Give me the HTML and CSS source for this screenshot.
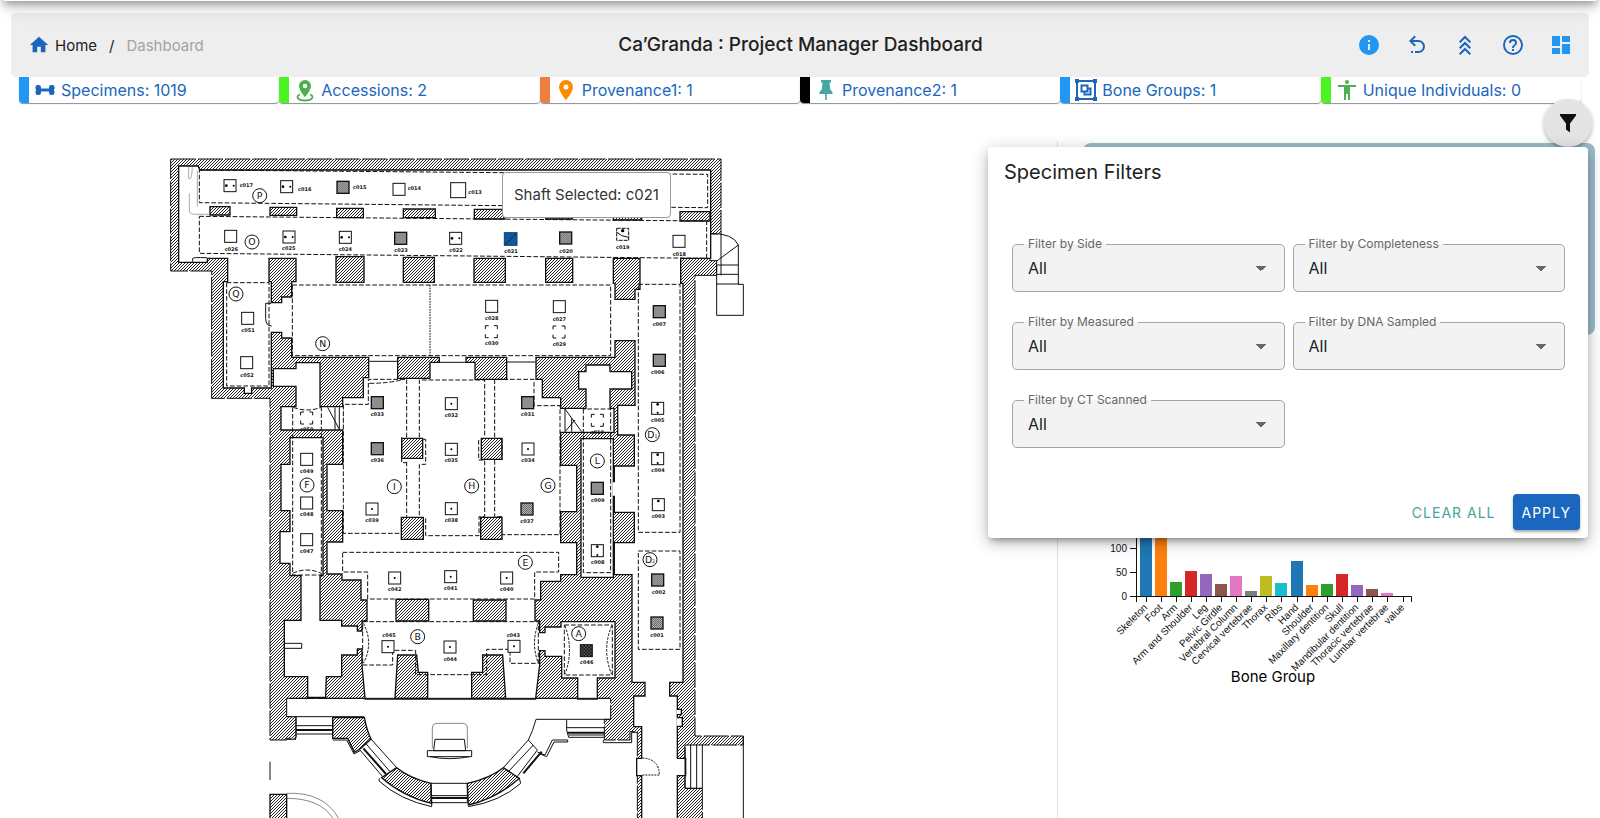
FILE: index.html
```html
<!DOCTYPE html>
<html lang="en">
<head>
<meta charset="utf-8">
<title>Ca’Granda : Project Manager Dashboard</title>
<link rel="stylesheet" href="styles.css">
</head>
<body>
<div class="app">
  <div class="app-bar-edge"></div>
  <header class="header">
    <nav class="crumbs" aria-label="Breadcrumb">
      <a class="crumb-home" href="#">
        <svg class="icon-home" viewBox="0 0 24 24"><path d="M10 20v-6h4v6h5v-8h3L12 3 2 12h3v8h5z"/></svg>
        <span>Home</span>
      </a>
      <span>/</span>
      <span class="crumb-current">Dashboard</span>
    </nav>
    <h1 class="title">Ca’Granda : Project Manager Dashboard</h1>
    <div class="tools">
      <button class="tool light" aria-label="Information"><svg viewBox="0 0 24 24"><path d="M13 9h-2V7h2m0 10h-2v-6h2m-1-9A10 10 0 0 0 2 12a10 10 0 0 0 10 10 10 10 0 0 0 10-10A10 10 0 0 0 12 2z"/></svg></button>
      <button class="tool" aria-label="Undo"><svg viewBox="0 0 24 24"><path d="M13.5 7a6.5 6.5 0 0 1 6.5 6.5 6.5 6.5 0 0 1-6.5 6.5H10v-2h3.5c2.5 0 4.5-2 4.5-4.5S16 9 13.5 9H7.83l3.08 3.09L9.5 13.5 4 8l5.500-5.500 1.420 1.410L7.830 7h5.670M6 18h2v2H6v-2z"/></svg></button>
      <button class="tool" aria-label="Collapse"><svg viewBox="0 0 24 24"><path class="stroke" d="M6.700 9.300 12 4l5.300 5.300M6.700 15.300 12 10l5.300 5.300M6.700 21.300 12 16l5.300 5.300"/></svg></button>
      <button class="tool" aria-label="Help"><svg viewBox="0 0 24 24"><path d="M11 18h2v-2h-2v2m1-16A10 10 0 0 0 2 12a10 10 0 0 0 10 10 10 10 0 0 0 10-10A10 10 0 0 0 12 2m0 18c-4.410 0-8-3.590-8-8s3.590-8 8-8 8 3.590 8 8-3.590 8-8 8m0-14a4 4 0 0 0-4 4h2a2 2 0 0 1 2-2 2 2 0 0 1 2 2c0 2-3 1.750-3 5h2c0-2.250 3-2.500 3-5a4 4 0 0 0-4-4z"/></svg></button>
      <button class="tool light" aria-label="Dashboard layout"><svg viewBox="0 0 24 24"><path d="M13 3v6h8V3m-8 18h8V11h-8M3 21h8v-6H3m0-2h8V3H3v10z"/></svg></button>
    </div>
  </header>

  <section class="stats" aria-label="Totals">
    <a class="stat blue" href="#"><svg viewBox="0 0 24 24" fill="#1b66bd"><path d="M6 10.500h12v3H6z"/><rect x="2.500" y="7" width="5.500" height="5.500" rx="2.300"/><rect x="2.500" y="11.500" width="5.500" height="5.500" rx="2.300"/><rect x="16" y="7" width="5.500" height="5.500" rx="2.300"/><rect x="16" y="11.500" width="5.500" height="5.500" rx="2.300"/></svg>Specimens: 1019</a>
    <a class="stat green" href="#"><svg viewBox="0 0 24 24" fill="#4caf50"><path d="M12 2a6 6 0 0 0-6 6c0 4.500 6 11 6 11s6-6.500 6-11a6 6 0 0 0-6-6m0 8.200A2.200 2.200 0 1 1 12 5.800a2.200 2.200 0 0 1 0 4.400z"/><path d="M7 16.500C2.500 18 4 22.500 12 22.500s9.500-4.500 5-6" fill="none" stroke="#4caf50" stroke-width="1.800"/></svg>Accessions: 2</a>
    <a class="stat orange" href="#"><svg viewBox="0 0 24 24" fill="#fb8c00"><path d="M12 11.500A2.500 2.500 0 0 1 9.500 9 2.500 2.500 0 0 1 12 6.500 2.500 2.500 0 0 1 14.500 9a2.500 2.500 0 0 1-2.500 2.500M12 2a7 7 0 0 0-7 7c0 5.250 7 13 7 13s7-7.750 7-13a7 7 0 0 0-7-7z"/></svg>Provenance1: 1</a>
    <a class="stat black" href="#"><svg viewBox="0 0 24 24" fill="#45a8a3"><path d="M17 2v2.500h-1.500l.8 7 2.200 2.500v2h-5.700v6h-1.600v-6H5.500v-2l2.200-2.500.8-7H7V2z"/></svg>Provenance2: 1</a>
    <a class="stat blue" href="#"><svg viewBox="0 0 24 24"><g fill="none" stroke="#1b66bd" stroke-width="2"><path d="M3 3h18v18H3zM7.500 7.500h6v6h-6zM10.500 13.500v3h6v-6h-3"/></g><path fill="#1b66bd" d="M1 1h4v4H1zM19 1h4v4h-4zM1 19h4v4H1zM19 19h4v4h-4z"/></svg>Bone Groups: 1</a>
    <a class="stat green" href="#"><svg viewBox="0 0 24 24" fill="#4caf50"><circle cx="12" cy="4" r="2"/><path d="M3 7h18v2h-6v13h-2v-6h-2v6H9V9H3z"/></svg>Unique Individuals: 0</a>
  </section>

  <main class="main">
    <section class="map-pane">
      <div class="map-wrap">
      <svg class="map" viewBox="0 0 1800 2004" role="img" aria-label="Crypt floor plan">
        <defs>
          <pattern id="hatch" width="9" height="9" patternUnits="userSpaceOnUse"><path d="M-2 2L2-2M0 9L9 0M7 11L11 7" stroke="#111" stroke-width="2.800"/></pattern>
          <pattern id="grain" width="6" height="6" patternUnits="userSpaceOnUse"><rect width="6" height="6" fill="#b5b5b5"/><path d="M0 0h3v3H0zM3 3h3v3H3z" fill="#666"/></pattern>
          <pattern id="check" width="10" height="10" patternUnits="userSpaceOnUse"><rect width="10" height="10" fill="#111"/><path d="M1 1h3v3H1zM6 6h3v3H6z" fill="#fff"/></pattern>
          <g id="sq"><rect x="-18" y="-18" width="36" height="36" fill="#fff" stroke="#111" stroke-width="3"/></g>
          <g id="dk"><rect x="-18" y="-18" width="36" height="36" fill="url(#grain)" stroke="#111" stroke-width="4"/></g>
          <g id="dot"><use href="#sq"/><circle r="3"/></g>
          <g id="hd"><use href="#sq"/><circle cx="-11" r="4"/><circle cx="11" r="3"/></g>
          <g id="vd"><use href="#sq"/><circle cy="-12" r="4"/><circle cy="13" r="3"/></g>
          <g id="ds"><path d="M-18 -8V-18H-8M8 -18H18V-8M18 8V18H8M-8 18H-18V8" fill="none" stroke="#111" stroke-width="3"/></g>
          <g id="rooms">
            <path d="M58 50H113L118 62H1650V323H140V335H58Z"/>
            <path d="M205 320H325V397H332V460H367V443H397V397H410V320H1358V402H1363V450H1427V420H1442V320H1560V402H1567V1595H1527V1640H1550V2004H1447V1728H1423V1640H1457V1595H1418V1272H1365V1180H1425V1085H1365V1037H1358V997H1365V950H1425V853H1375V768H1427V570H1363V620H1126V690H1145V745H1200V948H1248V1083H1200V1180H1248V1272H1200V1292H1140V1348H1123V1415H1137V1450H1157V1433H1205V1417H1363V1582H1310V1645H1255V1582H1207V1517H1157V1500H1137V1545L1125 1645H617L608 1545V1495H590V1513H543V1578H497L495 1640H445V1578H375V1413H425V1275H392V1238H362V1147H392V1080H365V945H392V865H487V1275H478V1413H543V1430H590V1445H608V1415H623V1348H605V1288H548V1270H503V1178H550V1080H503V945H550V745H612V685H628V620H397V562H367V545H332V712H192V397H205Z"/>
            <path d="M410 640H478V772H550V838H365V772H410V707H342V658H410Z"/>
            <path d="M1280 647H1348V667H1413V715H1348V777H1360V845H1200V777H1280V715H1258V667H1280Z"/>
            <path d="M1265 868H1358V1280H1265ZM255 710H273V728H255ZM1550 1680H1562V1692H1550ZM1550 1705H1565V1727H1550ZM1545 1827H1575V1875H1545ZM1432 1827H1450V1875H1432Z"/>
          </g>
        </defs>
        <path d="M32 27H1683V252H1650V332H1670V376H1605V1758H1750V1785H1575V1915H1627V2010H1432V1745H1410V1770H1333V1708H1352V1645H380V1700H408V1765H380V1770H330V745H155V363H32Z" fill="url(#hatch)" stroke="#111" stroke-width="3" stroke-dasharray="75 7"/>
        <use href="#rooms" fill="#111" stroke="#111" stroke-width="8"/>
        <use href="#rooms" fill="#fff"/>

        <g fill="url(#hatch)" stroke="#111" stroke-width="4">
          <path d="M150 170h60v25h-60zM330 172h80v24h-80zM530 175h80v28h-80zM730 177h96v26h-96zM943 178h92v29h-92zM1157 182h80v25h-80zM1360 184h85v26h-85zM1560 185h90v28h-90z"/>
          <path d="M528 320h84v77h-84zM730 322h93v75h-93zM942 325h94v72h-94zM1157 325h81v72h-81z"/>
          <path d="M713 622H838V637H810V685H713ZM918 622H1040V688H945V637H918Z"/>
          <path d="M725 865h63v60h-63zM964 865h62v63h-62zM724 1102h66v66h-66zM962 1102h64v66h-64z"/>
          <path d="M708 1348h98v65h-98zM940 1350h98v63h-98z"/>
          <path d="M713 1515H770L775 1567H803V1645H705ZM968 1515H1028L1037 1645H935V1567H968Z"/>
          <path d="M518 1703H613Q620 1740 633 1767L603 1795 583 1807 563 1765H518Z"/>
          <path d="M710 1853Q750 1885 813 1900L815 1960Q730 1940 665 1883Z"/>
          <path d="M922 1900Q990 1885 1030 1853L1078 1885Q1010 1945 925 1965Z"/>
          <path d="M330 1933h50v80h-50z"/>
        </g>

        <g fill="none" stroke="#111" stroke-width="3">
          <path d="M628 634H713M838 637H918M1040 636H1126M380 1645H1352M380 1700H613M408 1700V1760M408 1727H520M410 1752H518V1703"/>
          <path d="M408 1740H518M610 1795L678 1872M1090 1870L1145 1805M816 1944H922M1222 1748H1333" stroke-width="6"/>
          <path d="M633 1767L710 1853M617 1780L690 1865M600 1800L668 1880M813 1900H922V1958M813 1900V1958H922M816 1937H922M1030 1853L1105 1770L1132 1800L1070 1882M1045 1865L1120 1785M1128 1708Q1118 1745 1105 1770M1128 1708H1352M1220 1710V1740L1226 1762H1333M1220 1733H1333M1226 1755H1333"/>
          <path d="M380 1768H408M518 1770H560L582 1812 600 1802M658 1885L657 1893Q720 1950 815 1970V1960M925 1970Q1020 1955 1082 1900L1078 1885M1132 1806L1155 1815 1177 1770H1223V1776H1182L1160 1820 1140 1812M1330 1770V1778H1415V1747H1432"/>
          <path d="M802 1802H935V1820H802ZM810 1820Q868 1832 928 1820M825 1768H913L917 1802H821Z"/>
          <path d="M817 1795V1735Q817 1720 832 1720H907Q922 1720 922 1735V1795M380 1930Q490 1925 535 2004M380 1945Q480 1945 518 2004" stroke-width="1.500"/>
          <path d="M330 1835V1890M1575 1785V1915H1627V1785M1592 1785V1915M1610 1785V1915M1750 1758V2010"/>
          <path d="M1650 250Q1720 250 1735 285V403H1750V496H1670V345M1668 335L1735 285M1683 252V376M1670 345H1735M1670 373H1735M1670 402H1738"/>
          <path d="M98 335V325Q98 322 140 323M333 460H317V505Q317 528 335 528M375 1480H425V1495H375M503 772L538 838M525 772V838M538 772V838M1215 777V845M1215 777L1265 845M1235 805V845M1215 845L1245 810"/>
          <path d="M86 50V85Q95 95 97 52M88 130V185Q90 193 110 193H150M112 62V170" stroke-width="1.500" stroke="#555"/>
        </g>

        <g fill="none" stroke="#111" stroke-width="3" stroke-dasharray="14 6">
          <path d="M118 60L1030 68L1643 73V173L118 158Z"/>
          <path d="M118 199L1640 213V325L118 310Z"/>
          <path d="M200 398H327V708H200Z"/>
          <path d="M397 405H1352V617H397Z"/>
          <path d="M810 405V617" stroke-dasharray="5 3"/>
          <path d="M1435 403H1560V1147H1435ZM1435 1203H1560V1498H1435Z"/>
          <path d="M740 862V688H625V763H550V1150H724M740 935V1100M725 862V938H740"/>
          <path d="M628 700Q690 700 735 687"/>
          <path d="M778 862V690H974V862M790 868H797V943H778V1100M797 1105V1157H957V1100H974V930H956V865"/>
          <path d="M1004 862V688H1122V767H1200V1154H1026M1004 930V1100M1026 865V930M1026 1100H1004"/>
          <path d="M548 1207H1196V1266H1124V1347H623V1266H548Z"/>
          <path d="M608 1415H1135V1540H1050V1498H980V1574H767V1501H698V1545H608Z"/>
          <path d="M610 1420Q642 1480 610 1540M1135 1420Q1112 1480 1135 1540M1215 1427Q1242 1500 1215 1573M1355 1427Q1325 1500 1355 1573" stroke-dasharray="8 4"/>
          <path d="M1213 1425H1357V1575H1213Z"/>
          <path d="M398 772V1275H484V772M398 1270Q440 1250 484 1270M400 772Q440 788 484 772M1270 777V1268H1352V777Z"/>
          <path d="M1447 1824Q1498 1827 1498 1875H1447" stroke-dasharray="6 3"/>
        </g>

        <g class="zones">
          <g fill="#fff" stroke="#111" stroke-width="3"><circle cx="299" cy="137" r="21"/><circle cx="276" cy="276" r="21"/><circle cx="228" cy="432" r="21"/><circle cx="488" cy="581" r="21"/><circle cx="1477" cy="854" r="21"/><circle cx="1470" cy="1229" r="21"/><circle cx="703" cy="1010" r="21"/><circle cx="935" cy="1008" r="21"/><circle cx="1164" cy="1006" r="21"/><circle cx="441" cy="1005" r="21"/><circle cx="1096" cy="1237" r="21"/><circle cx="773" cy="1460" r="21"/><circle cx="1256" cy="1451" r="21"/><circle cx="1312" cy="933" r="21"/></g>
          <text x="299" y="147">P</text><text x="276" y="286">O</text><text x="228" y="442">Q</text><text x="488" y="591">N</text>
          <text x="1477" y="864">D<tspan class="sub">1</tspan></text><text x="1470" y="1239">D<tspan class="sub">2</tspan></text>
          <text x="703" y="1020">I</text><text x="935" y="1018">H</text><text x="1164" y="1016">G</text><text x="441" y="1015">F</text><text x="1096" y="1247">E</text><text x="773" y="1470">B</text><text x="1256" y="1461">A</text><text x="1312" y="943">L</text>
        </g>

        <g class="shafts">
          <use href="#hd" x="210" y="107"/><text x="259" y="112">c017</text>
          <use href="#hd" x="380" y="110"/><text x="434" y="123">c016</text>
          <use href="#dk" x="549" y="112"/><text x="599" y="117">c015</text>
          <use href="#sq" x="717" y="118"/><text x="763" y="121">c014</text>
          <rect x="872" y="98" width="45" height="45" fill="#fff" stroke="#111" stroke-width="3"/><text x="945" y="131">c013</text>
          <use href="#sq" x="212" y="259"/><text x="214" y="302">c026</text>
          <use href="#hd" x="387" y="261"/><text x="386" y="301">c025</text>
          <use href="#hd" x="556" y="262"/><text x="556" y="303">c024</text>
          <use href="#dk" x="722" y="265"/><text x="723" y="306">c023</text>
          <use href="#hd" x="887" y="265"/><text x="888" y="307">c022</text>
          <rect x="1033" y="248" width="38" height="38" fill="#11589f" stroke="#0b3f78" stroke-width="3"/><path d="M1035 284L1070 249" stroke="#111" stroke-width="3" stroke-dasharray="9 3"/><text x="1053" y="310">c021</text>
          <use href="#dk" x="1217" y="264"/><text x="1218" y="308">c020</text>
          <rect x="1370" y="235" width="36" height="36" fill="none" stroke="#111" stroke-width="3" stroke-dasharray="12 3"/><path d="M1370 246L1385 257 1406 262" fill="none" stroke="#111" stroke-width="3"/><circle cx="1388" cy="242" r="5"/><text x="1388" y="296">c019</text>
          <use href="#sq" x="1557" y="274"/><text x="1558" y="317">c018</text>
          <use href="#sq" x="263" y="505"/><text x="264" y="547">c051</text>
          <use href="#sq" x="260" y="638"/><text x="261" y="681">c052</text>
          <use href="#sq" x="995" y="469"/><text x="995" y="511">c028</text>
          <use href="#sq" x="1198" y="470"/><text x="1198" y="512">c027</text>
          <use href="#ds" x="994" y="545"/><text x="995" y="586">c030</text>
          <use href="#ds" x="1197" y="546"/><text x="1198" y="587">c029</text>
          <use href="#dk" x="1498" y="485"/><text x="1498" y="527">c007</text>
          <use href="#dk" x="1498" y="631"/><text x="1493" y="672">c006</text>
          <use href="#vd" x="1493" y="775"/><text x="1493" y="815">c005</text>
          <use href="#vd" x="1493" y="926"/><text x="1494" y="967">c004</text>
          <use href="#sq" x="1495" y="1064"/><circle cx="1495" cy="1053" r="4"/><text x="1495" y="1105">c003</text>
          <use href="#dk" x="1493" y="1290"/><text x="1496" y="1331">c002</text>
          <use href="#dk" x="1491" y="1419"/><text x="1491" y="1461">c001</text>
          <use href="#dk" x="652" y="758"/><text x="652" y="798">c033</text>
          <use href="#dot" x="874" y="761"/><text x="874" y="801">c032</text>
          <use href="#dk" x="1103" y="758"/><text x="1103" y="799">c031</text>
          <use href="#dk" x="652" y="896"/><text x="652" y="936">c036</text>
          <use href="#dot" x="874" y="898"/><text x="874" y="937">c035</text>
          <use href="#dot" x="1104" y="897"/><text x="1104" y="936">c034</text>
          <use href="#dot" x="636" y="1077"/><text x="636" y="1117">c039</text>
          <use href="#dot" x="874" y="1076"/><text x="874" y="1117">c038</text>
          <use href="#dk" x="1101" y="1077"/><text x="1101" y="1119">c037</text>
          <use href="#dot" x="704" y="1284"/><text x="704" y="1324">c042</text>
          <use href="#dot" x="872" y="1280"/><text x="872" y="1320">c041</text>
          <use href="#dot" x="1040" y="1284"/><text x="1040" y="1324">c040</text>
          <use href="#sq" x="440" y="928"/><text x="440" y="968">c049</text>
          <use href="#sq" x="440" y="1059"/><text x="440" y="1099">c048</text>
          <use href="#sq" x="440" y="1169"/><text x="440" y="1209">c047</text>
          <use href="#ds" x="440" y="804"/><text x="440" y="844">c050</text>
          <use href="#dot" x="684" y="1490"/><text x="687" y="1461">c045</text>
          <use href="#dot" x="870" y="1491"/><text x="871" y="1532">c044</text>
          <use href="#dot" x="1062" y="1489"/><text x="1060" y="1461">c043</text>
          <rect x="1261" y="1484" width="36" height="36" fill="url(#check)" stroke="#111" stroke-width="3"/><text x="1280" y="1541">c046</text>
          <use href="#dk" x="1312" y="1015"/><text x="1313" y="1057">c009</text>
          <use href="#vd" x="1312" y="1202"/><text x="1313" y="1243">c008</text>
          <use href="#ds" x="1312" y="811"/><text x="1312" y="851">c010</text>
        </g>
      </svg>
      <div class="tooltip" role="tooltip">Shaft Selected: c021</div>
      </div>
    </section>

    <aside class="side-pane">
      <div class="summary-card"></div>
      <svg class="chart" viewBox="0 0 420 340" role="img" aria-label="Bone group counts">
        <g>
          <rect x="55" y="40" width="12" height="201" fill="#1f77b4"/><rect x="70" y="100" width="12" height="141" fill="#ff7f0e"/><rect x="85" y="227" width="12" height="14" fill="#2ca02c"/><rect x="100" y="216" width="12" height="25" fill="#d62728"/><rect x="115" y="219" width="12" height="22" fill="#9467bd"/><rect x="130" y="229" width="12" height="12" fill="#8c564b"/><rect x="145" y="221" width="12" height="20" fill="#e377c2"/><rect x="160" y="236" width="12" height="5" fill="#7f7f7f"/><rect x="175" y="221" width="12" height="20" fill="#bcbd22"/><rect x="190" y="228" width="12" height="13" fill="#17becf"/><rect x="206" y="206" width="12" height="35" fill="#1f77b4"/><rect x="221" y="230" width="12" height="11" fill="#ff7f0e"/><rect x="236" y="229" width="12" height="12" fill="#2ca02c"/><rect x="251" y="219" width="12" height="22" fill="#d62728"/><rect x="266" y="230" width="12" height="11" fill="#9467bd"/><rect x="281" y="234" width="12" height="7" fill="#8c564b"/><rect x="296" y="238" width="12" height="3" fill="#e377c2"/>
        </g>
        <path class="axis" d="M51.500 20V247M45 193.500H51M45 217.500H51M45 241.500H326.500V247M61.500 241V247M76.500 241V247M91.500 241V247M106.500 241V247M121.500 241V247M136.500 241V247M151.500 241V247M166.500 241V247M181.500 241V247M196.500 241V247M212.500 241V247M227.500 241V247M242.500 241V247M257.500 241V247M272.500 241V247M287.500 241V247M302.500 241V247M318.500 241V247"/>
        <g class="ticks">
          <text x="42" y="197">100</text><text x="42" y="221">50</text><text x="42" y="245">0</text>
          <text transform="translate(63 253) rotate(-45)">Skeleton</text><text transform="translate(78 253) rotate(-45)">Foot</text><text transform="translate(93 253) rotate(-45)">Arm</text><text transform="translate(108 253) rotate(-45)">Arm and Shoulder</text><text transform="translate(123 253) rotate(-45)">Leg</text><text transform="translate(138 253) rotate(-45)">Pelvic Girdle</text><text transform="translate(153 253) rotate(-45)">Vertebral Column</text><text transform="translate(168 253) rotate(-45)">Cervical vertebrae</text><text transform="translate(183 253) rotate(-45)">Thorax</text><text transform="translate(198 253) rotate(-45)">Ribs</text><text transform="translate(214 253) rotate(-45)">Hand</text><text transform="translate(229 253) rotate(-45)">Shoulder</text><text transform="translate(244 253) rotate(-45)">Maxillary dentition</text><text transform="translate(259 253) rotate(-45)">Skull</text><text transform="translate(274 253) rotate(-45)">Mandibular dentition</text><text transform="translate(289 253) rotate(-45)">Thoracic vertebrae</text><text transform="translate(304 253) rotate(-45)">Lumbar vertebrae</text><text transform="translate(320 253) rotate(-45)">value</text>
        </g>
        <text class="chart-title" x="188" y="327">Bone Group</text>
      </svg>
    </aside>

    <button class="fab" aria-label="Filters"><svg viewBox="0 0 24 24"><path d="M4 3h16v1.500L14 12.500V21.500L10 18.500V12.500L4 4.500z"/></svg></button>

    <form class="filters">
      <h2 class="filters-title">Specimen Filters</h2>
      <div class="fields">
        <fieldset class="field"><legend><label for="f-side">Filter by Side</label></legend><select id="f-side"><option>All</option></select></fieldset>
        <fieldset class="field"><legend><label for="f-comp">Filter by Completeness</label></legend><select id="f-comp"><option>All</option></select></fieldset>
        <fieldset class="field"><legend><label for="f-meas">Filter by Measured</label></legend><select id="f-meas"><option>All</option></select></fieldset>
        <fieldset class="field"><legend><label for="f-dna">Filter by DNA Sampled</label></legend><select id="f-dna"><option>All</option></select></fieldset>
        <fieldset class="field"><legend><label for="f-ct">Filter by CT Scanned</label></legend><select id="f-ct"><option>All</option></select></fieldset>
      </div>
      <div class="actions">
        <button type="reset" class="btn-text">CLEAR ALL</button>
        <button type="button" class="btn-primary">APPLY</button>
      </div>
    </form>
  </main>
</div>
</body>
</html>
```

FILE: styles.css
```css
* { box-sizing: border-box; }

body {
  margin: 0;
  font-family: Inter, "Liberation Sans", sans-serif;
  font-size: 16px;
  color: #212121;
  background: #fff;
}

button { font: inherit; border: 0; cursor: pointer; }
a { color: inherit; text-decoration: none; }

.app {
  position: relative;
  display: flex;
  flex-direction: column;
  height: 100vh;
  padding-top: 13px;
  overflow: hidden;
}

/* Lower edge of the application bar, casting its shadow on the page */
.app-bar-edge {
  position: absolute;
  top: -9px;
  left: 4px;
  right: 4px;
  height: 10px;
  background: #fff;
  box-shadow: 0 2px 6px rgba(0, 0, 0, .28), 0 5px 12px rgba(0, 0, 0, .22), 0 6px 22px rgba(0, 0, 0, .12);
  z-index: 2;
}

.header {
  display: grid;
  grid-template-columns: 1fr auto 1fr;
  align-items: center;
  flex: none;
  height: 64px;
  margin: 0 11px;
  padding: 0 16px 0 17px;
  background: #eee;
  border-radius: 5px;
}

.crumbs { display: flex; align-items: center; gap: 12px; font-size: 15px; }
.crumb-home { display: flex; align-items: center; gap: 5px; }
.icon-home { width: 22px; height: 22px; fill: #1b66bd; }
.crumb-current { color: #a3a3a3; }

.title { margin: 0; font-size: 19px; font-weight: 500; line-height: 32px; }

.tools { display: flex; justify-content: flex-end; gap: 24px; }
.tool { width: 24px; height: 24px; padding: 0; background: none; color: #1b66bd; }
.tool.light { color: #2196f3; }
.tool svg { display: block; width: 24px; height: 24px; fill: currentColor; }
.tool .stroke { fill: none; stroke: currentColor; stroke-width: 2; }

.stats {
  display: grid;
  grid-template-columns: repeat(6, 1fr);
  flex: none;
  margin: 0 19px;
}

.stat {
  display: flex;
  align-items: center;
  gap: 4px;
  height: 26px;
  padding-left: 4px;
  border-left: 10px solid;
  border-radius: 0 0 4px 4px;
  box-shadow: 0 1px 1px rgba(0, 0, 0, .45);
  color: #1b66bd;
}
.stat svg { flex: none; width: 24px; height: 24px; }
.stat.blue { border-left-color: #2196f3; }
.stat.green { border-left-color: #4cf423; }
.stat.orange { border-left-color: #ed8040; }
.stat.black { border-left-color: #000; }

.main {
  position: relative;
  display: grid;
  grid-template-columns: 1058fr 542fr;
  flex: 1;
  min-height: 0;
  margin-top: 38px;
}

.map-pane { border-right: 1px solid #e0e0e0; padding: 9px 0 0 160px; min-width: 0; }
.map-wrap { position: relative; width: 600px; }
.map { display: block; width: 100%; }
.zones text { font: 28px "DejaVu Sans", sans-serif; text-anchor: middle; fill: #111; }
.zones .sub { font-size: 14px; }
.shafts text { font: bold 15px "DejaVu Sans", sans-serif; text-anchor: middle; fill: #111; }

.tooltip {
  position: absolute;
  left: 342px;
  top: 22px;
  padding: 0 11px;
  font-size: 15px;
  line-height: 44px;
  white-space: nowrap;
  color: #333;
  background: #fff;
  border: 1px solid #999;
  border-radius: 4px;
}

.side-pane { padding: 2px 5px 0 25px; min-width: 0; }
.summary-card { height: 192px; background: #9bbccb; border-radius: 8px; }
.chart { display: block; width: 420px; max-width: 100%; margin: 20px 0 0 2px; }
.axis { fill: none; stroke: #111; }
.ticks text { font: 10px "Liberation Sans", sans-serif; text-anchor: end; fill: #111; }
.chart-title { font-size: 15px; text-anchor: middle; fill: #000; }

.fab {
  position: absolute;
  top: -42px;
  right: 8px;
  display: grid;
  place-items: center;
  width: 48px;
  height: 48px;
  padding: 0;
  border-radius: 50%;
  background: #e4e4e4;
  box-shadow: 0 2px 4px rgba(0, 0, 0, .3);
}
.fab svg { width: 24px; height: 24px; fill: #111; }

.filters {
  position: absolute;
  top: 6px;
  right: 12px;
  width: 600px;
  padding: 9px 8px 8px 16px;
  background: #fff;
  border-radius: 4px;
  box-shadow: 0 5px 6px -3px rgba(0, 0, 0, .3), 0 4px 16px rgba(0, 0, 0, .3);
}
.filters-title { margin: 0; font-size: 20px; font-weight: 400; line-height: 32px; }

.fields {
  display: grid;
  grid-template-columns: 1fr 1fr;
  gap: 23px 8px;
  margin: 49px 15px 46px 8px;
}
.field {
  min-width: 0;
  margin: 0;
  padding: 0;
  height: 55px;
  background: #f3f3f3;
  border: 1px solid #a6a6a6;
  border-radius: 5px;
}
.field legend {
  margin-left: 11px;
  padding: 0 4px;
  font-size: 12px;
  line-height: 14px;
  color: #666;
}
.field select {
  display: block;
  width: 100%;
  height: 34px;
  padding: 0 15px;
  border: 0;
  appearance: none;
  font: inherit;
  color: #212121;
  background: conic-gradient(from -45deg at 50% 100%, #666 90deg, transparent 0) right 18px center / 10px 5px no-repeat;
}

.actions { display: flex; justify-content: flex-end; gap: 8px; }
.btn-text, .btn-primary {
  height: 36px;
  padding: 0 9px;
  border-radius: 4px;
  font-size: 14px;
  letter-spacing: 1px;
}
.btn-text { background: none; color: #45a59b; }
.btn-primary { background: #1b66bf; color: #fff; box-shadow: 0 2px 3px rgba(0, 0, 0, .35); }
```
